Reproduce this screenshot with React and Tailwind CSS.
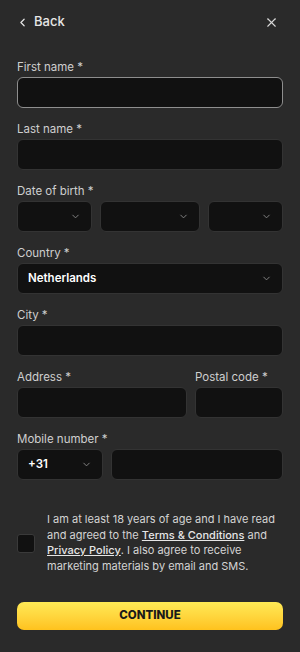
import React from "react";
import { ChevronLeft, ChevronDown, X } from "lucide-react";

const Label = ({ children }) => (
  <div className="text-[11.5px] leading-[14px] font-normal text-[#cfcfcf]">
    {children}
  </div>
);

const Input = ({ focused, className = "" }) => (
  <div
    className={`h-[31px] rounded-[6px] bg-[#111111] border ${
      focused ? "border-[#8e8e8e]" : "border-[#333333]"
    } ${className}`}
  />
);

const Select = ({ value, className = "" }) => (
  <div
    className={`h-[31px] rounded-[6px] bg-[#111111] border border-[#333333] flex items-center justify-between pl-[10px] pr-[10px] ${className}`}
  >
    <span className="text-[11.5px] font-semibold text-white">{value}</span>
    <ChevronDown className="w-[11px] h-[11px] text-[#8a8a8a]" strokeWidth={2} />
  </div>
);

const Field = ({ label, children }) => (
  <div className="flex flex-col gap-[3px]">
    <Label>{label}</Label>
    {children}
  </div>
);

export default function App() {
  return (
    <div
      className="w-[300px] h-[652px] bg-[#2a2a2a] px-[17px] text-white"
      style={{ fontFamily: "Inter, 'Noto Sans', sans-serif" }}
    >
      <div className="h-[44px] flex items-center justify-between">
        <div className="flex items-center gap-[5px]">
          <ChevronLeft className="w-[13px] h-[13px] text-[#e6e6e6] -ml-[1px]" strokeWidth={2.25} />
          <span className="text-[13px] font-medium text-[#e6e6e6]">Back</span>
        </div>
        <X className="w-[15px] h-[15px] text-[#d9d9d9] mr-[4px]" strokeWidth={1.75} />
      </div>

      <div className="mt-[16px] flex flex-col gap-[14px]">
        <Field label="First name *">
          <Input focused />
        </Field>
        <Field label="Last name *">
          <Input />
        </Field>
        <Field label="Date of birth *">
          <div className="grid grid-cols-[75px_1fr_75px] gap-[8px]">
            <Select value="" />
            <Select value="" />
            <Select value="" />
          </div>
        </Field>
        <Field label="Country *">
          <Select value="Netherlands" />
        </Field>
        <Field label="City *">
          <Input />
        </Field>
        <div className="grid grid-cols-[170px_1fr] gap-[8px]">
          <Field label="Address *">
            <Input />
          </Field>
          <Field label="Postal code *">
            <Input />
          </Field>
        </div>
        <Field label="Mobile number *">
          <div className="grid grid-cols-[86px_1fr] gap-[8px]">
            <Select value="+31" />
            <Input />
          </div>
        </Field>
      </div>

      <div className="mt-[32px] flex items-center gap-[12px]">
        <div className="w-[18px] h-[19px] shrink-0 rounded-[3px] bg-[#111111] border border-[#3a3a3a]" />
        <p className="text-[11px] leading-[15.5px] text-[#d4d4d4]">
          I am at least 18 years of age and I have read and agreed to the{" "}
          <span className="underline font-medium text-[#e6e6e6]">Terms &amp; Conditions</span>{" "}
          and{" "}
          <span className="underline font-medium text-[#e6e6e6]">Privacy Policy</span>. I also
          agree to receive marketing materials by email and SMS.
        </p>
      </div>

      <button className="mt-[28px] w-full h-[28px] rounded-[7px] bg-gradient-to-b from-[#ffea55] to-[#ffc21c] flex items-center justify-center">
        <span className="text-[11.5px] font-extrabold text-[#1a1a1a]">
          CONTINUE
        </span>
      </button>
    </div>
  );
}
